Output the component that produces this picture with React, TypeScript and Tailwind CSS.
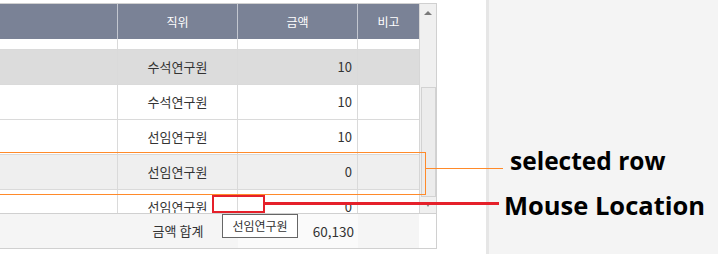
import React from "react";

const KR = { fontFamily: '"Noto Sans CJK KR", "Noto Sans", sans-serif' };

type Row = { h: string; bg: string; pos?: string; amt?: string };

const rows: Row[] = [
  { h: "h-[11px]", bg: "bg-white" },
  { h: "h-[35px]", bg: "bg-[#dcdcdc]", pos: "수석연구원", amt: "10" },
  { h: "h-[35px]", bg: "bg-white", pos: "수석연구원", amt: "10" },
  { h: "h-[35px]", bg: "bg-white", pos: "선임연구원", amt: "10" },
  { h: "h-[35px]", bg: "bg-[#efefef]", pos: "선임연구원", amt: "0" },
  { h: "h-[35px]", bg: "bg-white", pos: "선임연구원", amt: "0" },
];

export default function App() {
  return (
    <div className="relative w-[718px] h-[254px] bg-white overflow-hidden flex" style={KR}>
      <div className="w-[486px] shrink-0 pt-[3px]">
        <div className="w-[437px] border-t border-r border-b border-[#d0d0d0]">
          <div className="flex h-[209px]">
            <div className="w-[419px] flex flex-col">
              {/* header */}
              <div className="flex h-[35px] bg-[#7a8296] text-white text-[12px]">
                <div className="w-[118px] border-r border-[#c3c7d0]" />
                <div className="w-[120px] border-r border-[#c3c7d0] flex items-center justify-center">직위</div>
                <div className="w-[120px] border-r border-[#c3c7d0] flex items-center justify-center">금액</div>
                <div className="w-[61px] flex items-center justify-center">비고</div>
              </div>
              {/* body */}
              <div className="h-[174px] overflow-hidden text-[13px] text-[#333]">
                {rows.map((r, i) => (
                  <div key={i} className={`flex shrink-0 border-b border-[#dadada] ${r.h} ${r.bg}`}>
                    <div className="w-[118px] border-r border-[#dadada]" />
                    <div className="w-[120px] border-r border-[#dadada] flex items-center justify-center">{r.pos}</div>
                    <div className="w-[120px] border-r border-[#dadada] flex items-center justify-end pr-[5px]">{r.amt}</div>
                    <div className="w-[61px]" />
                  </div>
                ))}
              </div>
            </div>
            {/* scrollbar */}
            <div className="w-[17px] border-l border-[#d6d6d6] bg-[#f0f0f0] flex flex-col items-center">
              <div className="h-[18px] w-full flex items-center justify-center">
                <div className="w-0 h-0 border-l-[4px] border-r-[4px] border-b-[4px] border-l-transparent border-r-transparent border-b-[#7a7a7a]" />
              </div>
              <div className="h-[65px]" />
              <div className="ml-[1px] w-[15px] h-[110px] bg-[#ececec] border border-[#d2d2d2]" />
              <div className="flex-1 flex items-center justify-center">
                <div className="w-0 h-0 border-l-[2px] border-r-[2px] border-t-[3px] border-l-transparent border-r-transparent border-t-[#8a8a8a]" />
              </div>
            </div>
          </div>
          {/* footer */}
          <div className="flex h-[35px] border-t border-[#d0d0d0] text-[13px] text-[#333]">
            <div className="w-[118px] bg-[#f5f5f5]" />
            <div className="w-[120px] bg-[#f5f5f5] flex items-center justify-center">금액 합계</div>
            <div className="w-[120px] bg-[#fafafa] flex items-center justify-end pr-[4px] text-[13.5px]">60,130</div>
            <div className="w-[61px] bg-[#f5f5f5]" />
            <div className="flex-1 bg-white" />
          </div>
        </div>
      </div>
      <div className="flex-1 bg-[#f4f4f4] border-l-[3px] border-[#e6e6e6]" />

      {/* annotations */}
      <div className="absolute left-[-4px] top-[152px] w-[430px] h-[43px] border border-[#ff8a2a]" />
      <div className="absolute left-[425px] top-[168px] w-[78px] h-[1px] bg-[#ff8a2a]" />
      <div className="absolute left-[212px] top-[195px] w-[53px] h-[18px] border-2 border-[#e5202a]" />
      <div className="absolute left-[265px] top-[202px] w-[234px] h-[3px] bg-[#e5202a]" />
      <div className="absolute left-[222px] top-[214px] w-[76px] h-[24px] border border-[#666] bg-white text-[12px] text-[#333] flex items-center justify-center">
        선임연구원
      </div>
      <div
        className="absolute left-[510px] top-[146px] text-[24.5px] leading-[30px] font-bold text-black"
        style={{ fontFamily: '"Open Sans", sans-serif' }}
      >
        selected row
      </div>
      <div
        className="absolute left-[504px] top-[189px] text-[25.5px] leading-[32px] font-bold text-black"
        style={{ fontFamily: '"Open Sans", sans-serif' }}
      >
        Mouse Location
      </div>
    </div>
  );
}
